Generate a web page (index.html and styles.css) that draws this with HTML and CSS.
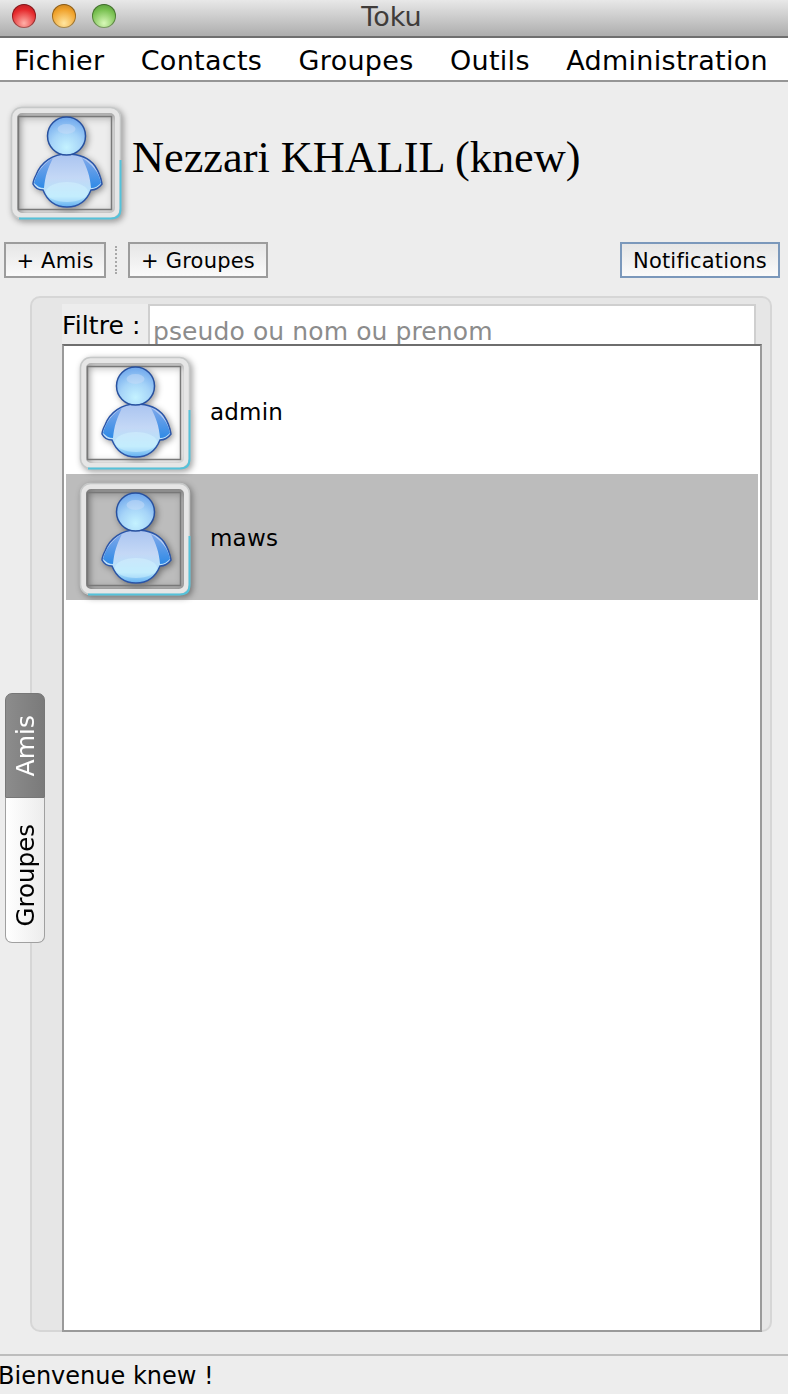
FILE: index.html
```html
<!DOCTYPE html>
<html lang="fr">

<head>
    <meta charset="UTF-8">
    <meta name="viewport" content="width=device-width, initial-scale=1.0">
    <title>Toku</title>
    <link rel="stylesheet" href="styles.css">
</head>

<body>
    <!-- avatar partagé -->
    <svg class="defs" width="0" height="0">
        <defs>
            <radialGradient id="headFill" cx="0.5" cy="0.8" r="0.8">
                <stop offset="0" stop-color="#c4f2ff" />
                <stop offset="0.5" stop-color="#a6d4f8" />
                <stop offset="1" stop-color="#6ea6ec" />
            </radialGradient>
            <linearGradient id="bodyFill" x1="0" y1="0" x2="0" y2="1">
                <stop offset="0" stop-color="#aac4f0" />
                <stop offset="0.45" stop-color="#c4d8f6" />
                <stop offset="0.8" stop-color="#b4e6fc" />
                <stop offset="1" stop-color="#62aef0" />
            </linearGradient>
            <linearGradient id="armFill" x1="0" y1="0" x2="0" y2="1">
                <stop offset="0" stop-color="#7fa8ea" />
                <stop offset="1" stop-color="#2f8ae6" />
            </linearGradient>
            <symbol id="avatar" viewBox="0 0 112 116">
                <rect x="4" y="4" width="104" height="106" rx="8" fill="none" stroke="#e6e6e6" stroke-width="6" />
                <rect x="1.500" y="1.500" width="109" height="111" rx="10" fill="none" stroke="#c6c8c8" stroke-width="1.500" />
                <path d="M9 112.500H101Q110.500 112.500 110.500 103V54" fill="none" stroke="#55c2da" stroke-width="2" />
                <rect x="8.500" y="10.500" width="93" height="93" fill="none" stroke="#787878" stroke-width="1.500" />
                <g transform="translate(1 2)">
                    <path d="M56 46C42 46 30 54 25 67C23 71 22 74 22 76C24 80 28 82 32 82C36 92 44 99 56 99C68 99 76 92 80 82C84 82 88 80 91 76C90 70 88 64 84 58C78 50 68 46 56 46Z" fill="url(#bodyFill)" stroke="#2a55a8" stroke-width="1.500" />
                    <path d="M23 75C26 64 32 56 42 50C37 60 34 68 33 80C29 80 26 78 23 75Z" fill="url(#armFill)" />
                    <path d="M90 75C88 64 81 56 71 50C76 60 79 68 80 80C84 80 87 78 90 75Z" fill="url(#armFill)" />
                    <ellipse cx="56" cy="84" rx="21" ry="10" fill="#d8f6ff" opacity="0.45" />
                    <circle cx="55.500" cy="28" r="19" fill="url(#headFill)" stroke="#27509f" stroke-width="1.500" />
                    <ellipse cx="55.500" cy="21" rx="9" ry="5" fill="#c8dcf8" opacity="0.5" />
                </g>
            </symbol>
        </defs>
    </svg>

    <div class="window">
        <div class="titlebar">
            <span class="light light-red"></span>
            <span class="light light-orange"></span>
            <span class="light light-green"></span>
            <div class="title">Toku</div>
        </div>

        <div class="menubar">
            <span>Fichier</span>
            <span>Contacts</span>
            <span>Groupes</span>
            <span>Outils</span>
            <span>Administration</span>
        </div>

        <div class="profile">
            <svg class="avatar"><use href="#avatar" /></svg>
            <h1 class="profile-name">Nezzari KHALIL (knew)</h1>
        </div>

        <div class="toolbar">
            <button class="btn btn-amis">+ Amis</button>
            <span class="grip"></span>
            <button class="btn btn-groupes">+ Groupes</button>
            <button class="btn btn-notif">Notifications</button>
        </div>

        <div class="panel-zone">
            <div class="tabs">
                <div class="tab tab-active"><span>Amis</span></div>
                <div class="tab tab-other"><span>Groupes</span></div>
            </div>
            <div class="panel">
                <div class="filter">
                    <label class="filter-label">Filtre :</label>
                    <div class="filter-input">pseudo ou nom ou prenom</div>
                </div>
                <div class="list">
                    <div class="row">
                        <svg class="avatar"><use href="#avatar" /></svg>
                        <span class="row-name">admin</span>
                    </div>
                    <div class="row row-selected">
                        <svg class="avatar"><use href="#avatar" /></svg>
                        <span class="row-name">maws</span>
                    </div>
                </div>
            </div>
        </div>

        <div class="statusbar">Bienvenue knew !</div>
    </div>
</body>

</html>
```

FILE: styles.css
```css
/* global */
html,
body {
    margin: 0;
    padding: 0;
    overflow: hidden;
}

body {
    font-family: "DejaVu Sans", sans-serif;
    background-color: #ededed;
    color: #000000;
}

.defs {
    position: absolute;
}

.window {
    width: 788px;
    height: 1394px;
    display: flex;
    flex-direction: column;
    overflow: hidden;
}

/* title bar */
.titlebar {
    flex: none;
    height: 32px;
    display: flex;
    align-items: center;
    gap: 16px;
    padding-left: 12px;
    padding-bottom: 4px;
    background: linear-gradient(180deg, #e8e8e8, #adadad);
    border-bottom: 2px solid #6f6f6f;
    position: relative;
}

.light {
    width: 24px;
    height: 24px;
    border-radius: 50%;
    box-shadow: inset 0 0 0 1px rgba(0, 0, 0, 0.35);
}

.light-red {
    background: radial-gradient(circle at 50% 80%, #ffb0a8, #e5292c 60%, #a81a20);
}

.light-orange {
    background: radial-gradient(circle at 50% 80%, #ffe6a0, #f0a22c 60%, #b87416);
}

.light-green {
    background: radial-gradient(circle at 50% 80%, #d8f8b8, #78c050 60%, #4c8c34);
}

.title {
    position: absolute;
    left: 0;
    right: 5px;
    top: 0;
    line-height: 34px;
    text-align: center;
    font-size: 27px;
    color: #403c3a;
}

/* menu */
.menubar {
    flex: none;
    height: 40px;
    padding: 2px 20px 0 14px;
    display: flex;
    align-items: center;
    justify-content: space-between;
    background-color: #ffffff;
    border-bottom: 2px solid #969696;
    font-size: 27px;
    letter-spacing: 0.3px;
}

/* profile */
.profile {
    flex: none;
    height: 116px;
    margin-top: 24px;
    padding-left: 10px;
    display: flex;
    align-items: center;
    gap: 10px;
}

.avatar {
    flex: none;
    width: 112px;
    height: 116px;
    filter: drop-shadow(2px 2px 3px rgba(0, 0, 0, 0.4));
}

.profile-name {
    margin: 0 0 14px;
    font-family: "Liberation Serif", serif;
    font-weight: normal;
    font-size: 44.300px;
}

/* buttons */
.toolbar {
    flex: none;
    height: 36px;
    margin-top: 20px;
    padding: 0 8px 0 4px;
    display: flex;
    align-items: stretch;
}

.btn {
    padding: 2px 0 0;
    font-family: inherit;
    font-size: 21px;
    letter-spacing: 0.2px;
    color: #000000;
    background: linear-gradient(180deg, #e6e6e6, #fafafa);
    border: 2px solid #9c9c9c;
}

.btn-amis {
    width: 102px;
}

.grip {
    width: 0;
    margin: 4px 9px;
    padding-left: 2px;
    border-left: 2px dotted #a8a8a8;
}

.btn-groupes {
    width: 140px;
}

.btn-notif {
    width: 160px;
    margin-left: auto;
    border-color: #7b98bb;
}

/* panel */
.panel-zone {
    flex: none;
    height: 1036px;
    margin-top: 18px;
    padding: 0 16px 0 30px;
    position: relative;
}

.panel {
    height: 100%;
    box-sizing: border-box;
    padding: 6px 8px 0 32px;
    background-color: #e6e6e6;
    border: 2px solid #d6d6d6;
    border-radius: 10px;
    display: flex;
    flex-direction: column;
}

.filter {
    flex: none;
    height: 40px;
    display: flex;
    background-color: #ededed;
    margin-left: -2px;
    margin-right: 6px;
}

.filter-label {
    width: 86px;
    flex: none;
    font-size: 25px;
    line-height: 44px;
    letter-spacing: 0.1px;
}

.filter-input {
    flex: 1;
    box-sizing: border-box;
    padding: 14px 0 0 3px;
    font-size: 25px;
    line-height: 24px;
    letter-spacing: 0.1px;
    color: #8c8c8c;
    background-color: #ffffff;
    border: 2px solid #cfcfcf;
    border-bottom: none;
}

.list {
    flex: 1;
    margin: 0 0 -2px -2px;
    padding: 2px 2px 0;
    background-color: #ffffff;
    border: 2px solid #9a9a9a;
    border-top-color: #6e6e6e;
}

.row {
    height: 126px;
    display: flex;
    align-items: center;
    gap: 18px;
    padding-left: 13px;
    font-size: 23px;
    letter-spacing: 0.2px;
}

.row .avatar {
    margin-top: 6px;
    margin-right: 1px;
}

.row-name {
    padding-top: 2px;
}

.row-selected {
    background-color: #bcbcbc;
}

/* vertical tabs */
.tabs {
    position: absolute;
    left: 5px;
    top: 397px;
    width: 40px;
    display: flex;
    flex-direction: column;
}

.tab {
    box-sizing: border-box;
    display: flex;
    align-items: center;
    justify-content: center;
    font-size: 25px;
}

.tab span {
    writing-mode: vertical-rl;
    transform: rotate(180deg);
}

.tab-active {
    height: 105px;
    color: #ffffff;
    background: linear-gradient(90deg, #8c8c8c, #7a7a7a);
    border-radius: 7px 7px 0 0;
    border: 1px solid #777777;
}

.tab-other {
    height: 145px;
    padding-top: 11px;
    font-size: 24.500px;
    background: linear-gradient(90deg, #ffffff, #ececec);
    border: 1px solid #a0a0a0;
    border-top: none;
    border-radius: 0 0 7px 7px;
}

/* status */
.statusbar {
    flex: 1;
    margin-top: 22px;
    padding-top: 1px;
    text-indent: -2px;
    border-top: 2px solid #bdbdbd;
    font-size: 24px;
    line-height: 38px;
}
```
